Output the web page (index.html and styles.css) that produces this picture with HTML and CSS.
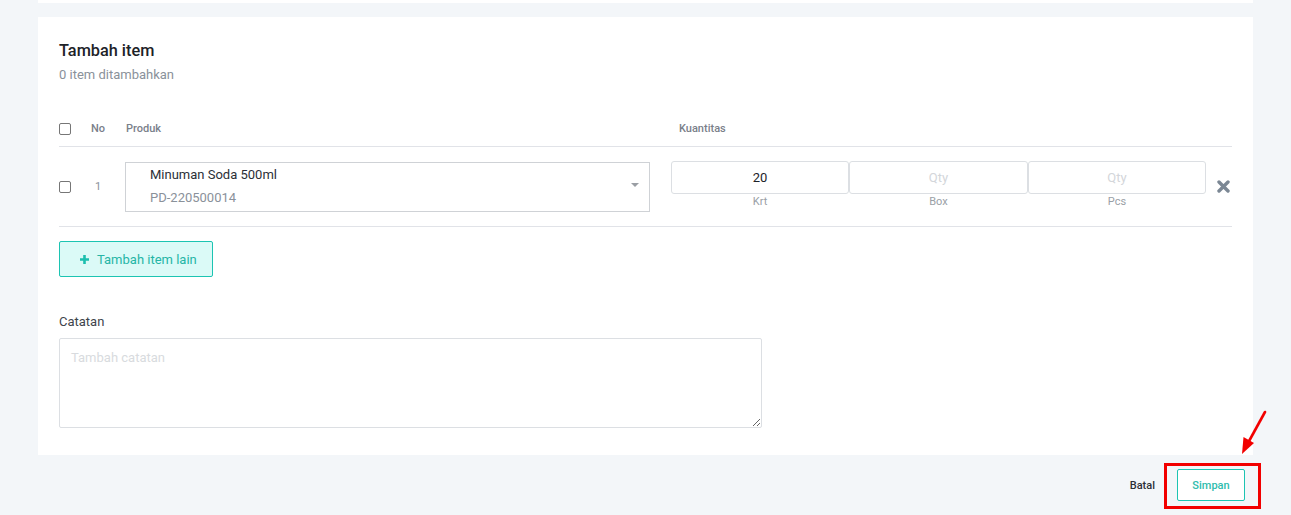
FILE: index.html
```html
<!DOCTYPE html>
<html lang="id">
<head>
    <meta charset="UTF-8">
    <meta name="viewport" content="width=device-width, initial-scale=1.0">
    <title>Tambah item</title>
    <link rel="stylesheet" href="styles.css">
</head>
<body>
    <div class="page">
        <div class="card card-prev"></div>

        <div class="card">
            <h2 class="title">Tambah item</h2>
            <p class="subtitle">0 item ditambahkan</p>

            <div class="table">
                <div class="row head">
                    <div class="col-check"><span class="checkbox"></span></div>
                    <div class="col-no">No</div>
                    <div class="col-product">Produk</div>
                    <div class="col-qty">Kuantitas</div>
                </div>

                <div class="row item">
                    <div class="col-check"><span class="checkbox"></span></div>
                    <div class="col-no">1</div>
                    <div class="col-product">
                        <div class="select">
                            <div class="select-name">Minuman Soda 500ml</div>
                            <div class="select-code">PD-220500014</div>
                            <span class="caret"></span>
                        </div>
                    </div>
                    <div class="col-qty">
                        <div class="qty-group">
                            <div class="qty">
                                <div class="qty-input">20</div>
                                <div class="qty-unit">Krt</div>
                            </div>
                            <div class="qty qty-mid">
                                <div class="qty-input empty">Qty</div>
                                <div class="qty-unit">Box</div>
                            </div>
                            <div class="qty">
                                <div class="qty-input empty">Qty</div>
                                <div class="qty-unit">Pcs</div>
                            </div>
                        </div>
                        <button class="remove" title="Hapus">
                            <svg width="13" height="13" viewBox="0 0 13 13">
                                <path d="M2 2 L11 11 M11 2 L2 11" stroke="#7b8794" stroke-width="3.4" stroke-linecap="round"/>
                            </svg>
                        </button>
                    </div>
                </div>
            </div>

            <button class="btn-add">
                <svg width="11" height="11" viewBox="0 0 11 11">
                    <path d="M5.5 1 V10 M1 5.5 H10" stroke="#1bbfae" stroke-width="2.6"/>
                </svg>
                Tambah item lain
            </button>

            <label class="note-label">Catatan</label>
            <textarea class="note" placeholder="Tambah catatan"></textarea>
        </div>

        <div class="actions">
            <a class="btn-cancel" href="#">Batal</a>
            <button class="btn-save">Simpan</button>
        </div>
    </div>

    <!-- annotation overlay -->
    <div class="mark-box"></div>
    <svg class="mark-arrow" width="40" height="50" viewBox="0 0 40 50">
        <path d="M32 2 L15 33" stroke="#f20000" stroke-width="2.6" stroke-linecap="round"/>
        <path d="M9 44 L10.5 27 L21 33 Z" fill="#f20000"/>
    </svg>
</body>
</html>
```

FILE: styles.css
```css
body {
    margin: 0;
    padding: 0;
    font-family: Roboto, "Liberation Sans", Arial, sans-serif;
    background-color: #f3f6f9;
    color: #212529;
}

.page {
    padding: 0 38px;
    width: 1215px;
}

.card {
    background-color: #ffffff;
    padding: 24px 21px 27px 21px;
}

.card-prev {
    height: 3px;
    padding: 0;
    margin-bottom: 14px;
}

.title {
    margin: 0;
    font-size: 16.3px;
    font-weight: 500;
    line-height: 20px;
    color: #1d2228;
}

.subtitle {
    margin: 4px 0 0 0;
    font-size: 13px;
    line-height: 20px;
    color: #8a919a;
}

.table {
    margin-top: 37px;
}

.row {
    display: flex;
    align-items: center;
    border-bottom: 1px solid #e1e3e8;
}

.row.head {
    height: 24px;
    align-items: flex-start;
    font-size: 11px;
    font-weight: 500;
    color: #7a808a;
}

.row.item {
    height: 79px;
}

.col-check {
    width: 32px;
    display: flex;
}

.col-no {
    width: 34px;
    font-size: 11px;
}

.row.head .col-no {
    width: 35px;
}

.row.item .col-no {
    color: #8a919a;
    padding-left: 4px;
    width: 30px;
}

.col-product {
    width: 546px;
}

.row.head .col-product {
    width: 553px;
}

.col-qty {
    flex: 1;
    display: flex;
    align-items: center;
}

.checkbox {
    display: block;
    width: 10px;
    height: 10px;
    border: 1px solid #767676;
    border-radius: 2px;
    background: #fff;
}

.row.head .checkbox {
    margin-top: 1px;
}

.select {
    position: relative;
    width: 499px;
    height: 48px;
    border: 1px solid #cfd2d6;
    padding-left: 24px;
    display: flex;
    flex-direction: column;
    justify-content: center;
    gap: 8px;
}

.select-name {
    font-size: 13px;
    color: #2b2f36;
    margin-top: -1px;
}

.select-code {
    font-size: 13px;
    color: #8a919a;
}

.caret {
    position: absolute;
    right: 10px;
    top: 20px;
    width: 0;
    height: 0;
    border-left: 4px solid transparent;
    border-right: 4px solid transparent;
    border-top: 4px solid #9a9ea4;
}

.qty-group {
    display: flex;
    margin-top: -3px;
}

.qty {
    width: 178px;
    text-align: center;
}

.qty-mid {
    width: 179px;
}

.qty-input {
    height: 31px;
    border: 1px solid #dcdfe3;
    border-radius: 3px;
    font-size: 13px;
    line-height: 31px;
    color: #1d2228;
}

.qty-input.empty {
    color: #d3d6da;
}

.qty-unit {
    font-size: 11px;
    color: #9aa0a6;
    margin-top: 1px;
    line-height: 14px;
}

.remove {
    background: none;
    border: none;
    padding: 0;
    margin-left: 11px;
    display: flex;
    cursor: pointer;
}

.btn-add {
    margin-top: 14px;
    display: flex;
    align-items: center;
    gap: 7px;
    height: 36px;
    padding: 0 15px 0 19px;
    background-color: #dbfaf7;
    border: 1px solid #1cc4b2;
    border-radius: 2px;
    font-family: inherit;
    font-size: 13px;
    color: #25b5a6;
    cursor: pointer;
}

.note-label {
    display: block;
    margin-top: 37px;
    font-size: 13px;
    line-height: 16px;
    color: #3e444b;
}

.note {
    display: block;
    margin-top: 8px;
    width: 703px;
    height: 90px;
    box-sizing: border-box;
    border: 1px solid #dcdfe3;
    border-radius: 2px;
    padding: 11px 11px;
    font-family: inherit;
    font-size: 13px;
    resize: vertical;
}

.note::placeholder {
    color: #d8dbde;
}

.actions {
    display: flex;
    justify-content: flex-end;
    align-items: center;
    gap: 22px;
    padding: 14px 8px 0 0;
}

.btn-cancel {
    font-size: 11px;
    font-weight: 500;
    color: #2b2f36;
    text-decoration: none;
}

.btn-save {
    width: 68px;
    height: 32px;
    background: #ffffff;
    border: 1px solid #1cc4b2;
    border-radius: 2px;
    font-family: inherit;
    font-size: 11px;
    font-weight: 500;
    color: #2fbcad;
    cursor: pointer;
}

.mark-box {
    position: absolute;
    left: 1164px;
    top: 463px;
    width: 91px;
    height: 40px;
    border: 3px solid #f20000;
}

.mark-arrow {
    position: absolute;
    left: 1233px;
    top: 410px;
}
```
